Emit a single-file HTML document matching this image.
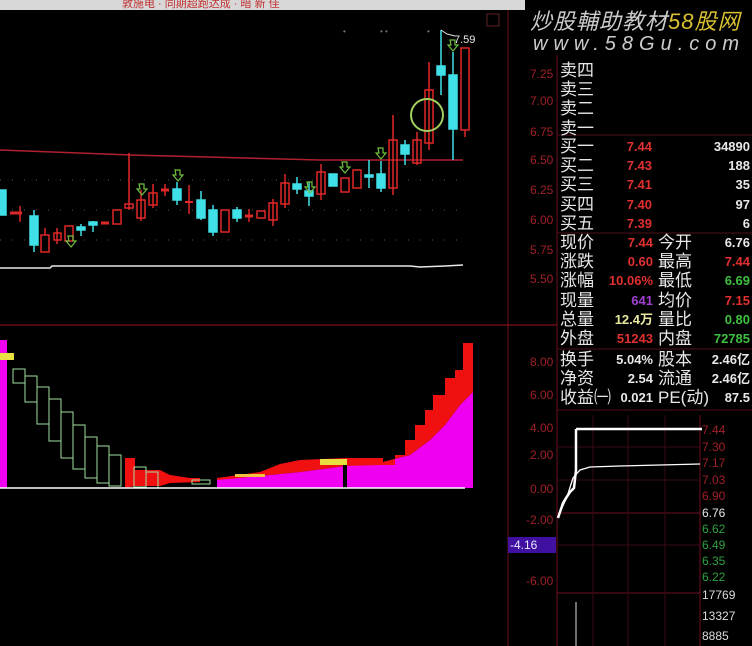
<!DOCTYPE html>
<html><head><meta charset="utf-8"><style>
body{margin:0;width:752px;height:646px;background:#000;overflow:hidden;position:relative;font-family:"Liberation Sans","Noto Sans CJK SC",sans-serif}
.t{position:absolute;white-space:nowrap}
.r{color:#e03030}.g{color:#40c040}.w{color:#e8e8e8}.y{color:#e8e8a0}
.lab{position:absolute;left:560px;font-size:17px;color:#e8e8e8;line-height:19.2px}
.v{position:absolute;font-size:13px;font-weight:bold;text-align:right;line-height:19.2px}
</style></head><body>
<svg width="752" height="646" style="position:absolute;left:0;top:0">
<rect x="0" y="0" width="525" height="10" fill="#d8d8d8"/>
<text x="122" y="7" font-size="11" fill="#c03030" font-family="Liberation Sans,Noto Sans CJK SC,sans-serif">敦施电 · 同期超跑达成 · 暗 新 佳</text>
<line x1="508" y1="10" x2="508" y2="646" stroke="#701020"/>
<line x1="557" y1="55" x2="557" y2="646" stroke="#701020"/>
<line x1="0" y1="325" x2="557" y2="325" stroke="#a01020"/>
<line x1="557" y1="135" x2="752" y2="135" stroke="#501018"/>
<line x1="557" y1="233" x2="752" y2="233" stroke="#501018"/>
<line x1="557" y1="349" x2="752" y2="349" stroke="#501018"/>
<line x1="557" y1="410" x2="752" y2="410" stroke="#501018"/>
<g stroke="#555" stroke-dasharray="1,11"><line x1="0" y1="180" x2="463" y2="180"/><line x1="0" y1="210" x2="463" y2="210"/><line x1="0" y1="240" x2="463" y2="240"/></g>
<polyline points="0,150 130,155 320,160 463,160" fill="none" stroke="#b02030" stroke-width="1.5"/>
<polyline points="0,268 50,268 52,266 410,266 420,267 445,266 463,265" fill="none" stroke="#e8e8e8" stroke-width="1.5"/>
<g stroke-width="1.5">
<g fill="#40e0e8" stroke="#40e0e8">
<rect x="0" y="190" width="6" height="25"/>
<rect x="30" y="216" width="8" height="29"/><line x1="34" y1="210" x2="34" y2="252"/>
<line x1="81" y1="224" x2="81" y2="236"/><rect x="77" y="227" width="8" height="3"/>
<line x1="93" y1="221" x2="93" y2="232"/><rect x="89" y="222" width="8" height="3"/>
<rect x="173" y="189" width="8" height="11"/><line x1="177" y1="182" x2="177" y2="205"/>
<rect x="197" y="200" width="8" height="18"/><line x1="201" y1="191" x2="201" y2="220"/>
<rect x="209" y="210" width="8" height="22"/><line x1="213" y1="205" x2="213" y2="236"/>
<rect x="233" y="210" width="8" height="8"/><line x1="237" y1="207" x2="237" y2="222"/>
<rect x="293" y="184" width="8" height="5"/><line x1="297" y1="177" x2="297" y2="194"/>
<rect x="305" y="191" width="8" height="5"/><line x1="309" y1="182" x2="309" y2="206"/>
<rect x="329" y="174" width="8" height="12"/>
<line x1="369" y1="160" x2="369" y2="188"/><rect x="365" y="175" width="8" height="2"/>
<rect x="377" y="174" width="8" height="14"/><line x1="381" y1="161" x2="381" y2="192"/>
<rect x="401" y="145" width="8" height="9"/><line x1="405" y1="140" x2="405" y2="165"/>
<rect x="437" y="66" width="8" height="9"/><line x1="441" y1="30" x2="441" y2="95"/>
<rect x="449" y="75" width="8" height="54"/><line x1="453" y1="52" x2="453" y2="160"/>
</g>
<g fill="none" stroke="#e02828">
<line x1="10" y1="213" x2="22" y2="213" stroke-width="3"/><line x1="20" y1="206" x2="20" y2="222"/>
<rect x="41" y="235" width="8" height="17"/><line x1="45" y1="228" x2="45" y2="235"/>
<rect x="54" y="233" width="7" height="7"/><line x1="57" y1="228" x2="57" y2="244"/>
<rect x="65" y="226" width="8" height="15"/>
<line x1="101" y1="223" x2="109" y2="223" stroke-width="3"/>
<rect x="113" y="210" width="8" height="14"/>
<rect x="125" y="204" width="8" height="4"/><line x1="129" y1="153" x2="129" y2="210"/>
<rect x="137" y="200" width="8" height="18"/><line x1="141" y1="190" x2="141" y2="221"/>
<rect x="149" y="193" width="8" height="12"/><line x1="153" y1="184" x2="153" y2="208"/>
<line x1="161" y1="190" x2="169" y2="190" stroke-width="3"/><line x1="165" y1="184" x2="165" y2="196"/>
<line x1="185" y1="202" x2="193" y2="202" stroke-width="2"/><line x1="189" y1="185" x2="189" y2="214"/>
<rect x="221" y="210" width="8" height="22"/>
<line x1="245" y1="216" x2="253" y2="216" stroke-width="3"/><line x1="249" y1="209" x2="249" y2="222"/>
<rect x="257" y="211" width="8" height="7"/>
<rect x="269" y="203" width="8" height="17"/><line x1="273" y1="199" x2="273" y2="226"/>
<rect x="281" y="183" width="8" height="21"/><line x1="285" y1="174" x2="285" y2="208"/>
<rect x="317" y="172" width="8" height="22"/><line x1="321" y1="164" x2="321" y2="200"/>
<rect x="341" y="178" width="8" height="14"/>
<rect x="353" y="170" width="8" height="18"/>
<rect x="389" y="140" width="8" height="48"/><line x1="393" y1="115" x2="393" y2="195"/>
<rect x="413" y="140" width="8" height="23"/><line x1="417" y1="132" x2="417" y2="165"/>
<rect x="425" y="90" width="8" height="53"/><line x1="429" y1="62" x2="429" y2="150"/>
<rect x="461" y="48" width="8" height="82"/><line x1="465" y1="130" x2="465" y2="137"/>
</g>
</g>
<circle cx="427" cy="115" r="16" fill="none" stroke="#a0d060" stroke-width="2"/>
<g fill="none" stroke="#70c040" stroke-width="1.2">
<path d="M139,184 h5 v5 h3 l-5,6 l-5,-6 h3z"/><path d="M175,170 h5 v5 h3 l-5,6 l-5,-6 h3z"/>
<path d="M307,182 h5 v5 h3 l-5,6 l-5,-6 h3z"/><path d="M342,162 h5 v5 h3 l-5,6 l-5,-6 h3z"/>
<path d="M378,148 h5 v5 h3 l-5,6 l-5,-6 h3z"/><path d="M450,40 h5 v5 h3 l-5,6 l-5,-6 h3z"/>
<path d="M68,236 h5 v5 h3 l-5,6 l-5,-6 h3z"/>
</g>
<polyline points="441,30 447,34 455,36" fill="none" stroke="#ddd"/>
<text x="454" y="43" font-size="11" fill="#e8e8e8">7.59</text>
<g fill="#777" font-size="8"><text x="343" y="34">•</text><text x="380" y="34">• •</text><text x="427" y="34">•</text></g>
<rect x="487" y="14" width="12" height="12" fill="none" stroke="#602020"/>
<g fill="#a02028" font-size="12">
<text x="530" y="78">7.25</text><text x="530" y="105">7.00</text><text x="530" y="136">6.75</text><text x="530" y="164">6.50</text><text x="530" y="194">6.25</text><text x="530" y="224">6.00</text><text x="530" y="254">5.75</text><text x="530" y="283">5.50</text>
<text x="530" y="366">8.00</text><text x="530" y="399">6.00</text><text x="530" y="432">4.00</text><text x="530" y="459">2.00</text><text x="530" y="493">0.00</text><text x="526" y="524">-2.00</text><text x="526" y="585">-6.00</text>
</g>
<rect x="508" y="537" width="48" height="16" fill="#4010a0"/>
<text x="510" y="549" font-size="12" fill="#e8e8ff">-4.16</text>
<polygon points="217,488 217,478 260,476 300,472 345,466 383,462 410,455 430,440 445,425 460,405 473,392 473,488" fill="#f000f0"/>
<polygon points="383,462 383,465 395,465 395,455 405,455 405,440 415,440 415,425 425,425 425,410 433,410 433,395 445,395 445,378 455,378 455,370 463,370 463,343 473,343 473,392 460,405 445,425 430,440 410,455" fill="#f01010"/>
<polygon points="383,465 383,458 345,458 300,460 280,464 260,472 217,478 217,480 260,476 300,472 345,466" fill="#f01010"/>
<polygon points="125,458 135,458 135,470 160,470 170,475 190,478 200,478 200,482 170,483 160,486 135,486 125,488" fill="#f01010"/>
<rect x="343" y="460" width="4" height="28" fill="#000"/>
<rect x="320" y="459" width="27" height="6" fill="#e8e040"/>
<rect x="235" y="474" width="30" height="3" fill="#f0c040"/>
<rect x="0" y="340" width="7" height="148" fill="#f000f0"/>
<rect x="0" y="353" width="14" height="7" fill="#e8e040"/>
<g fill="none" stroke="#a0e0a0" stroke-width="1">
<rect x="13" y="369" width="12" height="14"/><rect x="25" y="376" width="12" height="26"/><rect x="37" y="387" width="12" height="37"/><rect x="49" y="399" width="12" height="42"/><rect x="61" y="412" width="12" height="46"/><rect x="73" y="425" width="12" height="44"/><rect x="85" y="437" width="12" height="41"/><rect x="97" y="446" width="12" height="37"/><rect x="109" y="455" width="12" height="31"/><rect x="134" y="467" width="12" height="20"/><rect x="146" y="472" width="12" height="16"/><rect x="192" y="480" width="18" height="4"/>
</g>
<line x1="0" y1="488" x2="465" y2="488" stroke="#fff" stroke-width="1.5"/>
<g stroke="#3a0a14"><line x1="557" y1="513" x2="700" y2="513" stroke="#701020"/><line x1="557" y1="593" x2="700" y2="593" stroke="#701020"/><line x1="628" y1="415" x2="628" y2="646"/><line x1="593" y1="415" x2="593" y2="646"/><line x1="665" y1="415" x2="665" y2="646"/><line x1="700" y1="415" x2="700" y2="646" stroke="#701020"/>
<line x1="557" y1="447" x2="700" y2="447"/><line x1="557" y1="480" x2="700" y2="480"/><line x1="557" y1="545" x2="700" y2="545"/></g>
<polyline points="576,429 702,429" stroke="#fff" stroke-width="2.5" fill="none"/>
<polyline points="558,518 563,503 566,498 570,492 574,488 576,470 576,429" stroke="#fff" stroke-width="2.5" fill="none"/>
<polyline points="560,512 567,497 573,478 580,470 590,467 620,466 660,465 700,464" stroke="#fff" stroke-width="1.3" fill="none"/>
<line x1="576" y1="602" x2="576" y2="646" stroke="#ddd"/>
<g font-size="12"><g fill="#a02028"><text x="702" y="434">7.44</text><text x="702" y="451">7.30</text><text x="702" y="467">7.17</text><text x="702" y="484">7.03</text><text x="702" y="500">6.90</text></g>
<text x="702" y="517" fill="#e8e8e8">6.76</text><g fill="#30a040"><text x="702" y="533">6.62</text><text x="702" y="549">6.49</text><text x="702" y="565">6.35</text><text x="702" y="581">6.22</text></g>
<g fill="#ddd"><text x="702" y="599">17769</text><text x="702" y="620">13327</text><text x="702" y="640">8885</text></g></g>
</svg>
<div class="t" style="left:530px;top:4px;font-size:22px;font-style:italic;color:#ccc;letter-spacing:1px">炒股輔助教材<span style="color:#d8c030">58股网</span></div>
<div class="t" style="left:533px;top:33px;font-size:20px;font-style:italic;color:#ccc;letter-spacing:6px">www.58Gu.com</div>
<div class="lab" style="top:61px">卖四<br>卖三<br>卖二<br>卖一</div>
<div class="lab" style="top:137px">买一<br>买二<br>买三<br>买四<br>买五</div>
<div class="v r" style="left:600px;width:52px;top:137px">7.44<br>7.43<br>7.41<br>7.40<br>7.39</div>
<div class="v w" style="left:680px;width:70px;top:137px">34890<br>188<br>35<br>97<br>6</div>
<div class="lab" style="top:233px">现价<br>涨跌<br>涨幅<br>现量<br>总量<br>外盘</div>
<div class="lab" style="left:658px;top:233px">今开<br>最高<br>最低<br>均价<br>量比<br>内盘</div>
<div class="v" style="left:590px;width:63px;top:233px"><span class="r">7.44</span><br><span class="r">0.60</span><br><span class="r">10.06%</span><br><span style="color:#a040d0">641</span><br><span class="y">12.4万</span><br><span class="r">51243</span></div>
<div class="v" style="left:690px;width:60px;top:233px"><span class="w">6.76</span><br><span class="r">7.44</span><br><span class="g">6.69</span><br><span class="r">7.15</span><br><span class="g">0.80</span><br><span class="g">72785</span></div>
<div class="lab" style="top:350px">换手<br>净资<br>收益㈠</div>
<div class="lab" style="left:658px;top:350px">股本<br>流通<br>PE(动)</div>
<div class="v w" style="left:600px;width:53px;top:350px">5.04%<br>2.54<br>0.021</div>
<div class="v w" style="left:690px;width:60px;top:350px">2.46亿<br>2.46亿<br>87.5</div>
</body></html>
